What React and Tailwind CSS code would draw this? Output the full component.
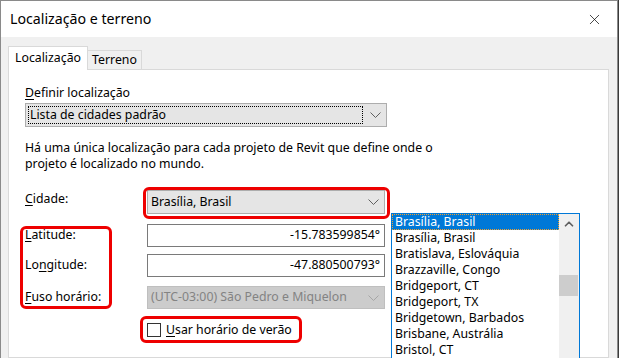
import { X, ChevronUp } from 'lucide-react'

const font = { fontFamily: '"Noto Sans", "Open Sans", sans-serif' }

const cities = [
  'Brasília, Brasil',
  'Brasília, Brasil',
  'Bratislava, Eslováquia',
  'Brazzaville, Congo',
  'Bridgeport, CT',
  'Bridgeport, TX',
  'Bridgetown, Barbados',
  'Brisbane, Austrália',
  'Bristol, CT',
]

const Chevron = ({ disabled }) => (
  <svg width="11" height="6" viewBox="0 0 11 6" className="shrink-0">
    <path d="M0.5 0.5 L5.5 5.5 L10.5 0.5" fill="none" stroke={disabled ? '#a6a6a6' : '#606060'} strokeWidth="1" />
  </svg>
)

const Label = ({ u, rest }) => (
  <span>
    <span className="underline underline-offset-2">{u}</span>
    {rest}
  </span>
)

const App = () => {
  return (
    <div className="relative h-[358px] w-[619px] overflow-hidden bg-[#3a3a3a] text-[12.3px] text-black" style={font}>
      <div className="flex h-[358px] w-[618px] flex-col border-l border-t border-r border-[#8a8a8a] bg-[#f0f0f0]">
        {/* title bar */}
        <div className="flex h-[36px] shrink-0 items-center justify-between bg-white pl-[9px] pr-[14px]">
          <span className="text-[14.2px] leading-none">Localização e terreno</span>
          <X size={17} strokeWidth={1} className="text-black" />
        </div>

        <div className="flex flex-1 flex-col pl-[7px] pr-[8px] pt-[9px]">
          {/* tabs */}
          <div className="relative z-10 flex h-[24px] items-end">
            <div className="flex h-[24px] w-[80px] items-center justify-center border border-b-0 border-[#d9d9d9] bg-white pb-[1px]">
              Localização
            </div>
            <div className="flex h-[20px] w-[54px] items-center justify-center border border-l-0 border-[#d9d9d9] bg-[#f0f0f0]">
              Terreno
            </div>
          </div>

          {/* panel */}
          <div className="-mt-px flex-1 border border-[#d9d9d9] bg-white pl-[16px] pt-[15px]">
            <div className="leading-[16px]">
              <Label u="D" rest="efinir localização" />
            </div>
            <div className="mt-[2px] flex h-[24px] w-[362px] items-center border border-[#adadad] bg-[#e5e5e5] pl-[2px] pr-[4px]">
              <div className="flex h-[18px] w-[335px] items-center border border-dotted border-black pl-[1px]">
                Lista de cidades padrão
              </div>
              <div className="flex flex-1 justify-end pr-[1px]">
                <Chevron />
              </div>
            </div>

            <p className="mt-[13px] w-[440px] leading-[16px]">
              Há uma única localização para cada projeto de Revit que define onde o<br />
              projeto é localizado no mundo.
            </p>

            <div className="mt-[18px] flex">
              <div className="w-[122px] pt-[1px] leading-[16px]">
                <Label u="C" rest="idade:" />
              </div>
              <div className="flex h-[24px] w-[238px] items-center justify-between border border-[#adadad] bg-[#e5e5e5] pl-[3px] pr-[5px]">
                <span>Brasília, Brasil</span>
                <Chevron />
              </div>
            </div>

            <div className="mt-[10px] flex items-center">
              <div className="w-[122px]">
                <Label u="L" rest="atitude:" />
              </div>
              <div className="flex h-[23px] w-[238px] items-center justify-end border border-[#7a7a7a] bg-white pr-[4px]">
                -15.783599854°
              </div>
            </div>

            <div className="mt-[7px] flex items-center">
              <div className="w-[122px]">
                <span>Lo</span>
                <span className="underline underline-offset-2">n</span>
                <span>gitude:</span>
              </div>
              <div className="flex h-[23px] w-[238px] items-center justify-end border border-[#7a7a7a] bg-white pr-[4px]">
                -47.880500793°
              </div>
            </div>

            <div className="mt-[9px] flex items-center">
              <div className="w-[122px]">
                <Label u="F" rest="uso horário:" />
              </div>
              <div className="flex h-[23px] w-[238px] items-center justify-between overflow-hidden whitespace-nowrap border border-[#bfbfbf] bg-[#cccccc] pl-[3px] pr-[5px] text-[#838383]">
                <span>(UTC-03:00) São Pedro e Miquelon</span>
                <Chevron disabled />
              </div>
            </div>

            <div className="mt-[12px] flex items-center pl-[122px]">
              <div className="h-[14px] w-[14px] border border-[#333333] bg-white" />
              <span className="ml-[5px]">
                <Label u="U" rest="sar horário de verão" />
              </span>
            </div>
          </div>
        </div>
      </div>

      {/* annotations */}
      <div className="absolute left-[143px] top-[187px] h-[32px] w-[247px] rounded-[6px] border-[3px] border-[#ee0000]" />
      <div className="absolute left-[20px] top-[226px] h-[83px] w-[92px] rounded-[6px] border-[3px] border-[#ee0000]" />
      <div className="absolute left-[140px] top-[316px] h-[27px] w-[162px] rounded-[6px] border-[3px] border-[#ee0000]" />

      {/* open list */}
      <div className="absolute left-[391px] top-[213px] flex h-[160px] w-[189px] border border-[#0078d7] bg-white">
        <div className="flex-1 leading-[16px]">
          {cities.map((c, i) => (
            <div
              key={i}
              className={
                i === 0
                  ? 'h-[16px] border border-dotted border-[#f0a030] bg-[#0078d7] pl-[2px] leading-[14px] text-white'
                  : 'h-[16px] pl-[3px]'
              }
            >
              {c}
            </div>
          ))}
        </div>
        <div className="relative w-[20px] bg-[#f0f0f0]">
          <ChevronUp size={14} strokeWidth={3} className="absolute left-[3px] top-[3px] text-[#606060]" />
          <div className="absolute left-0 top-[61px] h-[21px] w-[19px] bg-[#cdcdcd]" />
        </div>
      </div>
    </div>
  )
}

export default App
